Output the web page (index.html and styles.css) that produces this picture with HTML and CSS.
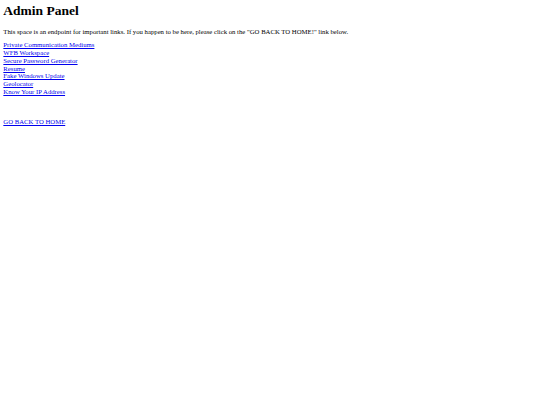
FILE: index.html
```html
<!DOCTYPE html>
<html>
<head>
<meta charset="utf-8">
<title>Admin Panel</title>
<link rel="stylesheet" href="styles.css">
</head>
<body>
<h1 class="title">Admin Panel</h1>
<p class="intro">This space is an endpoint for important links. If you happen to be here, please click on the "GO BACK TO HOME!" link below.</p>
<nav class="links">
<a href="#">Private Communication Mediums</a>
<a href="#">WFB Workspace</a>
<a href="#">Secure Password Generator</a>
<a href="#">Resume</a>
<a href="#">Fake Windows Update</a>
<a href="#">Geolocator</a>
<a href="#">Know Your IP Address</a>
</nav>
<div class="home"><a href="#">GO BACK TO HOME</a></div>
</body>
</html>
```
FILE: styles.css
```css
html, body {
  margin: 0;
  background: #ffffff;
}
body {
  padding: 3.33px;
  font-family: "Liberation Serif", "Times New Roman", serif;
  font-size: 6.72px;
  line-height: 7.75px;
  color: #000000;
}
a {
  color: #0000ee;
  text-decoration: underline;
}
.title {
  margin: 0 0 9.6px 0;
  font-size: 13.5px;
  line-height: 15.3px;
  font-weight: bold;
}
.intro {
  margin: 0 0 5.3px 0;
}
.links {
  display: flex;
  flex-direction: column;
  align-items: flex-start;
}
.home {
  margin-top: 22px;
}
```
